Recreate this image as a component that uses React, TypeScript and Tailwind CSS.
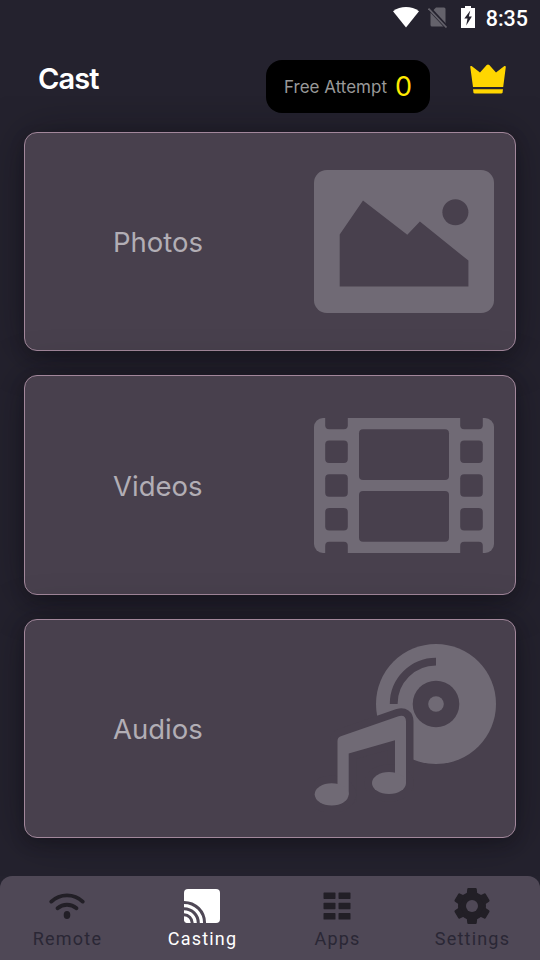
import React from 'react';

const PhotoIcon = () => (
  <svg width="180" height="143" viewBox="0 0 180 143">
    <rect width="180" height="143" rx="12.8" fill="#706a75" />
    <path d="M25.7 64.5 49 30.5l44.3 34.3 12.6-13.2 48.5 39v26H25.7z" fill="#48404d" />
    <circle cx="141.4" cy="42.3" r="13" fill="#48404d" />
  </svg>
);

const VideoIcon = () => (
  <svg width="180" height="135" viewBox="0 0 180 135">
    <rect width="180" height="135" rx="9" fill="#706a75" />
    <g fill="#48404d">
      <rect x="45" y="11.2" width="90" height="50.7" rx="4" />
      <rect x="45" y="73.1" width="90" height="50.7" rx="4" />
      {[-11.3, 22.5, 56.3, 90, 123.8].map((y) => (
        <React.Fragment key={y}>
          <rect x="11.2" y={y} width="22.6" height="22.5" rx="4" />
          <rect x="146.2" y={y} width="22.6" height="22.5" rx="4" />
        </React.Fragment>
      ))}
    </g>
  </svg>
);

const Note = () => (
  <>
    <path d="M23.5 107q0-3.8 4-5L84.5 82.2q7.5-1.8 7.5 5.3V149H81v-42.8l-46.3 13.2v41H23.5z" />
    <ellipse cx="17.7" cy="160.3" rx="17" ry="11.1" />
    <ellipse cx="75" cy="149" rx="17" ry="11.1" />
  </>
);

const AudioIcon = () => (
  <svg width="182" height="172" viewBox="0 6 182 172">
    <circle cx="122" cy="70" r="60" fill="#706a75" />
    <circle cx="122" cy="70" r="23.3" fill="#48404d" />
    <circle cx="122" cy="70" r="7.8" fill="#706a75" />
    <path d="M79.7 70A42.3 42.3 0 0 1 122 27.7" fill="none" stroke="#48404d" strokeWidth="7.8" />
    <g fill="#48404d" stroke="#48404d" strokeWidth="15">
      <Note />
    </g>
    <g fill="#706a75">
      <Note />
    </g>
  </svg>
);

const CrownIcon = () => (
  <svg width="38" height="30" viewBox="0 0 38 30" fill="#ffd600">
    <path d="M1.2 2.6Q1.5 1.5 2.6 2.1l8.4 6.3L17.7 1q1.3-1.1 2.6 0L27 8.4l8.4-6.3q1.3-.6 1.4.8l-2.6 20.2H4z" />
    <path d="M4 25.2h30l-.4 3q-.2 1.3-1.5 1.3H5.8q-1.2 0-1.4-1.3z" />
  </svg>
);

const RemoteIcon = () => (
  <svg width="36" height="36" viewBox="0 0 36 36" fill="none" stroke="#221f26" strokeLinecap="round">
    <path d="M2.3 13.6C11 5.3 25 5.3 33.7 13.6" strokeWidth="3.8" />
    <path d="M8.5 20.2c5.6-4.6 13.4-4.6 19 0" strokeWidth="3.8" />
    <ellipse cx="18" cy="27" rx="3.3" ry="3.9" fill="#221f26" stroke="none" />
  </svg>
);

const CastingIcon = () => (
  <svg width="36" height="36" viewBox="0 0 36 36">
    <path d="M0 5q0-4 4-4h28q4 0 4 4v26q0 4-4 4H0z" fill="#fff" />
    <g fill="none" stroke="#4f4856" strokeWidth="3">
      <path d="M0 14.4A20.6 20.6 0 0 1 20.6 35" />
      <path d="M0 20.7A14.3 14.3 0 0 1 14.3 35" />
      <path d="M0 26.8A8.2 8.2 0 0 1 8.2 35" />
    </g>
    <path d="M0 32.5V35h2.5Q.4 34.600 0 32.500z" fill="#4f4856" />
  </svg>
);

const AppsIcon = () => (
  <svg width="36" height="36" viewBox="0 0 36 36" fill="#221f26">
    {[4.4, 14.7, 25].map((y) => (
      <React.Fragment key={y}>
        <rect x="4.5" y={y} width="12" height="6.6" rx="0.7" />
        <rect x="19.5" y={y} width="12" height="6.6" rx="0.7" />
      </React.Fragment>
    ))}
  </svg>
);

const SettingsIcon = () => (
  <svg width="36" height="36" viewBox="0 0 36 36" fill="#221f26">
    <circle cx="18" cy="18" r="14" />
    {[0, 60, 120, 180, 240, 300].map((a) => (
      <path key={a} d="M12.7 7 13.2 1.200q.1-1.200 1.200-1.200h7.200q1.100 0 1.200 1.200l.5 5.800z" transform={`rotate(${a} 18 18)`} />
    ))}
    <circle cx="18" cy="18" r="6" fill="#4f4856" />
  </svg>
);

const cards = [
  { label: 'Photos', icon: <PhotoIcon />, size: 'h-[219px]', pad: 'pt-[37px] pr-[21px]' },
  { label: 'Videos', icon: <VideoIcon />, size: 'h-[220px]', pad: 'pt-[42px] pr-[21px]' },
  { label: 'Audios', icon: <AudioIcon />, size: 'h-[219px]', pad: 'pt-[20px] pr-[19px]' },
];

const tabs = [
  { label: 'Remote', icon: <RemoteIcon />, active: false },
  { label: 'Casting', icon: <CastingIcon />, active: true },
  { label: 'Apps', icon: <AppsIcon />, active: false },
  { label: 'Settings', icon: <SettingsIcon />, active: false },
];

export default function App() {
  return (
    <div className="flex h-[960px] w-[540px] flex-col overflow-hidden bg-[#24222e] font-['Inter',sans-serif]">
      {/* Status bar */}
      <div className="flex h-9 shrink-0 items-center justify-end pr-3 text-white">
        <svg width="26" height="21" viewBox="0 0 26 21" className="-mt-0.5 mr-[9px]" fill="#fff">
          <path d="M0 4.2C7.5-1.4 18.5-1.4 26 4.2L13 20.5z" />
        </svg>
        <svg width="20" height="21" viewBox="0 0 20 21" className="-mt-0.5 mr-[13px]">
          <path d="M8 .5h8q1.5 0 1.5 1.5v16q0 1.5-1.5 1.5H4q-1.500 0-1.500-1.500V6z" fill="#64626b" />
          <path d="M.5.5 19 20.5" stroke="#24222e" strokeWidth="4" />
          <path d="M.5 1.5 18.5 20.5" stroke="#64626b" strokeWidth="1.7" />
        </svg>
        <svg width="14" height="22" viewBox="0 0 14 22" className="-mt-0.5 mr-[11px]">
          <path d="M4 0h6v2h4v20H0V2h4z" fill="#fff" />
          <path d="M9.300 4.500 3.300 12.500h3.200L5.200 19.500 10.900 10.500H7.800z" fill="#24222e" />
        </svg>
        <span className="mt-0.5 font-['Roboto',sans-serif] text-[21.5px] leading-none font-medium">8:35</span>
      </div>

      {/* Header */}
      <header className="relative z-10 flex h-[60px] shrink-0 items-start pr-[33px] pl-[38px]">
        <h1 className="pt-[25px] text-[29px] leading-9 font-semibold tracking-[-0.9px] text-white">Cast</h1>
        <div className="mt-6 ml-auto flex h-[53px] w-[164px] shrink-0 items-center justify-center gap-2 rounded-[16px] bg-black pt-0.5">
          <span className="text-[17px] text-[#999]">Free Attempt</span>
          <span className="text-[27px] text-[#ffea00]">0</span>
        </div>
        <div className="mt-7 ml-[39px]">
          <CrownIcon />
        </div>
      </header>

      {/* Media list */}
      <main className="flex flex-1 flex-col gap-6 overflow-hidden px-6 pt-9">
        {cards.map((card) => (
          <button
            key={card.label}
            className={`flex w-full shrink-0 items-start rounded-[13px] border border-[#a2879b] bg-[#48404d] text-left shadow-[0_2px_44px_-4px_rgba(12,10,16,0.5),0_6px_14px_rgba(12,10,18,0.25)] ${card.size}`}
          >
            <span className="flex h-full flex-1 items-center pt-[3px] pl-[88px] text-[27.5px] text-[#b2aeb5]">
              {card.label}
            </span>
            <span className={card.pad}>{card.icon}</span>
          </button>
        ))}
      </main>

      {/* Bottom navigation */}
      <nav className="grid h-[84px] shrink-0 grid-cols-4 rounded-t-[12px] bg-[#4f4856] font-['Roboto',sans-serif]">
        {tabs.map((tab) => (
          <button key={tab.label} className="flex flex-col items-center pt-3">
            <span className="mr-px">{tab.icon}</span>
            <span
              className={`mt-[5px] text-[18px] leading-5 tracking-[1.2px] ${tab.active ? 'text-white' : 'text-[#2a2735]'}`}
            >
              {tab.label}
            </span>
          </button>
        ))}
      </nav>
    </div>
  );
}
